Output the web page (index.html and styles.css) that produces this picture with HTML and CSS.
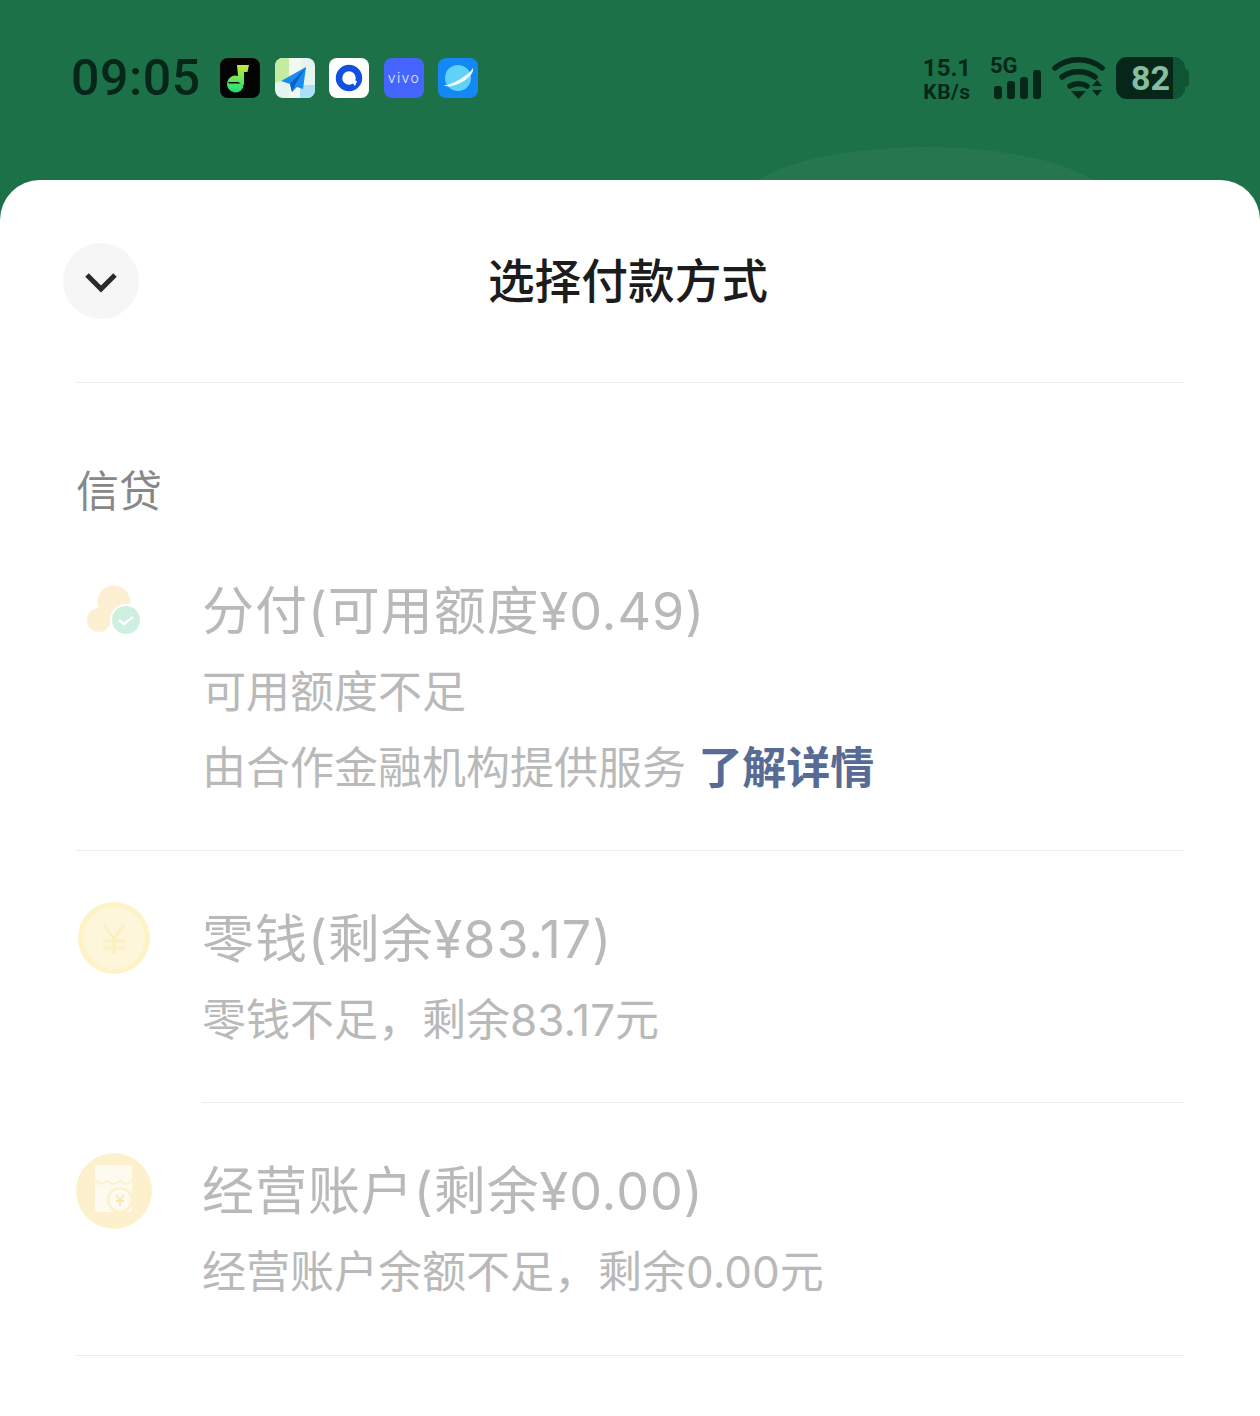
FILE: index.html
```html
<!DOCTYPE html>
<html lang="zh">
<head>
<meta charset="utf-8">
<title>选择付款方式</title>
<link rel="stylesheet" href="styles.css">
</head>
<body>
<div class="screen">
  <header class="top">
    <div class="hump"></div>
    <div class="status">
      <div class="status-left">
        <span class="time">09:05</span>
        <div class="apps">
          <svg class="app" viewBox="0 0 40 40"><defs><linearGradient id="note" x1="0" y1="0" x2="0" y2="1"><stop offset="0" stop-color="#c6ea3a"/><stop offset="1" stop-color="#18e07a"/></linearGradient></defs><rect width="40" height="40" rx="8" fill="#040404"/><path d="M17 7h12l-1.500 7H24v12a8.500 8.500 0 1 1-6-8.100z" fill="url(#note)"/><path d="M8 24h10l3 1.500H9zM23 27h9v1.500h-9z" fill="#040404"/></svg>
          <svg class="app" viewBox="0 0 40 40"><rect width="40" height="40" rx="8" fill="#e6f4ef"/><path d="M0 8a8 8 0 0 1 8-8h6v20L0 25z" fill="#c4eb9f"/><path d="M14 0h12v40H14z" fill="#f2f8f4"/><path d="M25 40V27h15v5a8 8 0 0 1-8 8z" fill="#abe0f8"/><path d="M31 9 6 23l9 3 2 8 5-5 6 2z" fill="#1a8cf0"/><path d="M31 9 15 26l2 8 3-7z" fill="#0f5fc4"/></svg>
          <svg class="app" viewBox="0 0 40 40"><rect width="40" height="40" rx="8" fill="#fff"/><circle cx="20" cy="20" r="10" fill="none" stroke="#1450e0" stroke-width="6.500"/><path d="M20 21l8 2-2 5z" fill="#fff"/></svg>
          <svg class="app" viewBox="0 0 40 40"><rect width="40" height="40" rx="8" fill="#4466ff"/><text class="vivo" x="20" y="24.500" text-anchor="middle">vivo</text></svg>
          <svg class="app" viewBox="0 0 40 40"><rect width="40" height="40" rx="8" fill="#1388f5"/><circle cx="20" cy="20" r="13" fill="#5fd2f5"/><path d="M6 27c6 1 24-9 29-17 1 4-3 9-9 13-8 5-17 7-20 4z" fill="#f2f8ff"/></svg>
        </div>
      </div>
      <div class="status-right">
        <div class="speed"><span>15.1</span><span>KB/s</span></div>
        <div class="signal">
          <span class="fiveg">5G</span>
          <div class="bars"><i class="b1"></i><i class="b2"></i><i class="b3"></i><i class="b4"></i></div>
        </div>
        <svg class="wifi" viewBox="0 0 54 46"><g fill="none" stroke="#06261a" stroke-width="5.500" stroke-linecap="round"><path d="M3 13C16 2 37 2 50 13"/><path d="M10 22c9-7 24-7 33 0"/><path d="M18 31c5-3 12-3 17 0"/></g><path d="M19 36h15l-7.500 8z" fill="#06261a"/><path d="M40 31l5-6 5 6zM40 35h10l-5 6z" fill="#06261a"/></svg>
        <div class="battery"><div class="batt-fill"><span>82</span></div><div class="batt-rest"></div><div class="batt-cap"></div></div>
      </div>
    </div>
  </header>

  <main class="sheet">
    <div class="title-bar">
      <button class="close" type="button" aria-label="收起">
        <svg class="chev" viewBox="0 0 36 24" width="36" height="24"><path d="M4 4l14 14L32 4" fill="none" stroke="#2a2a2a" stroke-width="5"/></svg>
      </button>
      <h1>选择付款方式</h1>
    </div>

    <h2 class="section">信贷</h2>

    <section class="row row-first">
      <div class="icon-col">
        <svg class="ic-fen" viewBox="0 0 56 52"><circle cx="27" cy="15" r="16.500" fill="#fdf0d2"/><circle cx="12" cy="33" r="12" fill="#fdf0d2"/><circle cx="39" cy="33" r="16" fill="#fff"/><circle cx="39" cy="33" r="14" fill="#cdf0e0"/><path d="M32 33l5 4 9-7" fill="none" stroke="#fff" stroke-width="2.500"/></svg>
      </div>
      <div class="info">
        <div class="name">分付(可用额度¥0.49)</div>
        <div class="desc">可用额度不足</div>
        <div class="desc">由合作金融机构提供服务 <a class="link">了解详情</a></div>
      </div>
    </section>

    <section class="row row-second">
      <div class="icon-col">
        <svg class="ic-coin" viewBox="0 0 72 72"><circle cx="36" cy="36" r="36" fill="#fdf3c6"/><circle cx="36" cy="36" r="31" fill="#fdf6da"/><path d="M26 23l10 14 10-14M25 39h22M25 46h22M36 37v15" fill="none" stroke="#fbf0c0" stroke-width="3"/></svg>
      </div>
      <div class="info">
        <div class="name">零钱(剩余¥83.17)</div>
        <div class="desc">零钱不足，剩余83.17元</div>
      </div>
    </section>

    <section class="row row-third">
      <div class="icon-col">
        <svg class="ic-shop" viewBox="0 0 76 76"><circle cx="38" cy="38" r="38" fill="#fdf1cd"/><path d="M22 12h31a3 3 0 0 1 3 3v41a3 3 0 0 1-3 3H22a3 3 0 0 1-3-3V15a3 3 0 0 1 3-3z" fill="#fffaf0"/><path d="M19 27c5 5 7 5 12 1 5 4 8 4 13 0 4 4 8 4 12-1" fill="none" stroke="#fdf1cd" stroke-width="2"/><circle cx="44" cy="47" r="13" fill="#fdf1cd"/><circle cx="44" cy="47" r="10.500" fill="#fffaf0"/><path d="M40 42l4 5 4-5M40 48h8M44 47v6" fill="none" stroke="#fbe7b0" stroke-width="1.800"/></svg>
      </div>
      <div class="info">
        <div class="name">经营账户(剩余¥0.00)</div>
        <div class="desc">经营账户余额不足，剩余0.00元</div>
      </div>
    </section>
  </main>
</div>
</body>
</html>
```
FILE: styles.css
```css
* { box-sizing: border-box; }
html, body { margin: 0; padding: 0; }
body {
  width: 1260px;
  height: 1416px;
  overflow: hidden;
  background: #fff;
  font-family: "Noto Sans CJK SC", "Noto Sans", sans-serif;
}
.screen { width: 1260px; height: 1416px; background: #1c7148; display: flex; flex-direction: column; overflow: hidden; }

.top { position: relative; height: 180px; flex: none; padding: 52px 70px 0 71px; }
.hump {
  position: absolute;
  left: 738px;
  top: 147px;
  width: 375px;
  height: 120px;
  border-radius: 50%;
  background: #26774f;
}
.status { position: relative; display: flex; justify-content: space-between; align-items: center; height: 52px; color: #06261a; }
.status-left { display: flex; align-items: center; gap: 19px; }
.time { font-family: Roboto, sans-serif; font-size: 50px; font-weight: 500; line-height: 52px; letter-spacing: .6px; width: 130px; white-space: nowrap; }
.apps { display: flex; gap: 14.500px; }
.app { width: 40px; height: 40px; display: block; }
.vivo { font-family: Inter, sans-serif; font-size: 14px; font-weight: 300; fill: #e8ecff; letter-spacing: 1.400px; }

.status-right { display: flex; align-items: center; }
.speed { display: flex; flex-direction: column; align-items: center; font-family: Roboto, sans-serif; font-weight: 700; line-height: 24px; width: 52px; margin-right: 2px; padding-top: 3px; }
.speed span:first-child { font-size: 24px; }
.speed span:last-child { font-size: 21px; letter-spacing: .5px; }
.signal { margin-left: 16px; width: 52px; height: 46px; position: relative; }
.fiveg { position: absolute; left: -1px; top: -1px; font-family: Roboto, sans-serif; font-weight: 700; font-size: 22px; line-height: 24px; }
.bars { position: absolute; left: 3px; bottom: 2px; display: flex; align-items: flex-end; gap: 5px; }
.bars i { display: block; width: 8px; border-radius: 3px; background: #06261a; }
.b1 { height: 13px; } .b2 { height: 18px; } .b3 { height: 22px; } .b4 { height: 29px; }
.wifi { width: 54px; height: 46px; margin-left: 9px; display: block; }
.battery { margin-left: 10px; display: flex; align-items: center; width: 74px; height: 42px; }
.batt-fill { width: 57px; height: 42px; background: #06261a; border-radius: 11px 0 0 11px; display: flex; align-items: center; justify-content: flex-end; }
.batt-fill span { color: #86bd9e; font-family: Roboto, sans-serif; font-weight: 700; font-size: 34px; line-height: 42px; margin-right: 3px; }
.batt-rest { width: 12px; height: 42px; background: #0f5434; border-radius: 0 11px 11px 0; }
.batt-cap { width: 4px; height: 18px; background: #0f5434; border-radius: 0 4px 4px 0; }

.sheet { position: relative; flex: 1; background: #fff; border-radius: 40px 40px 0 0; padding: 0 75px 0 76px; }
.title-bar { position: relative; height: 203px; border-bottom: 1px solid #ececec; display: flex; justify-content: center; padding: 66px 5px 0 0; }
.title-bar h1 { margin: 0; font-size: 46.700px; line-height: 64px; font-weight: 500; color: #1c1c1c; }
.close {
  position: absolute;
  left: -13px;
  top: 63px;
  width: 76px;
  height: 76px;
  padding: 4px 0 0;
  border: 0;
  border-radius: 50%;
  background: #f6f6f6;
  display: flex;
  align-items: center;
  justify-content: center;
}
.section { margin: 76px 0 0; font-size: 43px; line-height: 58px; font-weight: 400; color: #888; }

.row { display: flex; }
.icon-col { width: 126px; flex: none; display: flex; }
.info { flex: 1; border-bottom: 1px solid #ececec; padding-top: 4px; }
.name, .desc { font-family: Inter, "Noto Sans CJK SC", sans-serif; color: #b9b9b9; white-space: nowrap; line-height: 76px; }
.name { font-size: 52px; margin-bottom: 4px; letter-spacing: .95px; }
.desc { font-size: 44px; }
.link { color: #576b95; font-weight: 700; }

.row-first { margin-top: 53px; border-bottom: 1px solid #ececec; height: 281px; }
.row-first .info { border-bottom: 0; }
.ic-fen { width: 56px; height: 52px; margin: 17px 0 0 11px; display: block; overflow: visible; }
.row-second { height: 252px; padding-top: 47px; }
.ic-coin { width: 72px; height: 72px; margin: 4px 0 0 2px; display: block; }
.row-third { height: 253px; padding-top: 47px; border-bottom: 1px solid #ececec; }
.row-third .info { border-bottom: 0; }
.ic-shop { width: 76px; height: 76px; margin-top: 3px; display: block; }
```
